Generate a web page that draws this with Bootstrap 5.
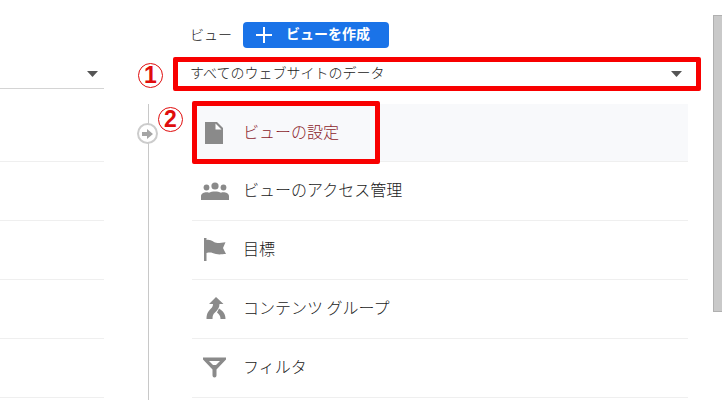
<!DOCTYPE html>
<html lang="ja">
<head>
<meta charset="utf-8">
<meta name="viewport" content="width=device-width, initial-scale=1">
<title>ビューの設定</title>
<link href="https://cdn.jsdelivr.net/npm/bootstrap@5.3.0/dist/css/bootstrap.min.css" rel="stylesheet">
<style>
  body { font-family: "Noto Sans CJK JP", sans-serif; color: #3c4043; font-size: 16px; background: #fff; }
  .admin { height: 100vh; }
  .side { width: 104px; }
  .gutter { width: 86px; padding-left: 44px; }
  .tail { width: 34px; }
  .head { height: 59px; padding-top: 10px; gap: 11px; }
  .picker { height: 30px; margin-bottom: 15px; }
  .picker select { height: 26px; font-size: 14px; line-height: 20px; font-weight: 300; color: #222; padding: 0 24px 0 0; appearance: none; }
  .caret { right: 6px; top: 12px; pointer-events: none; }
  .side .picker { border-bottom: 1px solid #d4d4d4; }
  .entry { height: 59px; border-bottom: 1px solid #efefef; font-weight: 300; color: #222; line-height: 24px; }
  .entry:first-child { height: 58px; }
  a.entry { padding: 0 0 4px 9px; gap: 14px; }
  a.entry svg { width: 28px; height: 28px; margin-top: 5px; fill: #8a8a8a; }
  .entry.current { background: #f8f9fb; color: #8c1d2c; }
  .menu { margin-left: 2px; }
  .title { font-size: 14px; font-weight: 300; line-height: 20px; color: #222; padding-bottom: 2px; }
  .create { background: #1a73e8; color: #fff; height: 26px; width: 146px; font-size: 14px; font-weight: 700; line-height: 20px; padding: 0 0 3px 13px; gap: 14px; border-radius: 4px; }
  .create svg { margin-top: 3px; }
  .create:hover { background: #1765cc; color: #fff; }
  .rail { width: 1px; background: #c8c8c8; margin-top: 104px; }
  .step { left: -11px; top: 19px; width: 21px; height: 21px; border: 2px solid #ccc; background: #fff; }
  .thumb { width: 9px; height: 297px; margin-top: 15px; background: #c9c9c9; border: 1px solid #b0b0b0; border-right: 0; }
  .frame { border: 5px solid #f80000; border-radius: 2px; pointer-events: none; }
  .frame-picker { left: -17px; right: -13px; top: -2px; height: 34px; }
  .frame-entry { left: 0; top: -3px; width: 188px; height: 63px; }
  .callout { width: 25px; height: 25px; border: 1px solid #e00c0c; color: #e00c0c; font-family: "Liberation Sans", sans-serif; font-size: 23px; line-height: 23px; font-weight: 700; }
  .callout-one { left: -52px; top: 4px; }
  .callout-two { left: -34px; top: 3px; }
</style>
<script src="https://cdn.jsdelivr.net/npm/bootstrap@5.3.0/dist/js/bootstrap.bundle.min.js"></script>
</head>
<body>
<main class="admin d-flex overflow-hidden">
  <section class="side flex-shrink-0">
    <div class="head"></div>
    <div class="picker position-relative">
      <select class="w-100 border-0 bg-transparent" aria-label="プロパティ"><option></option></select>
      <svg class="caret position-absolute" width="11" height="6" aria-hidden="true"><path d="M0 0h11L5.500 6z" fill="#555"/></svg>
    </div>
    <div>
      <div class="entry"></div><div class="entry"></div><div class="entry"></div><div class="entry"></div><div class="entry"></div>
    </div>
  </section>

  <div class="gutter flex-shrink-0 d-flex">
    <div class="rail position-relative">
      <span class="step position-absolute rounded-circle d-flex align-items-center justify-content-center">
        <svg width="11" height="10" viewBox="0 0 11 10" aria-hidden="true"><path d="M0 3h5V0l6 5-6 5V7H0z" fill="#a5a5a5"/></svg>
      </span>
    </div>
  </div>

  <section class="flex-grow-1">
    <div class="head d-flex align-items-center">
      <h1 class="title mb-0">ビュー</h1>
      <button type="button" class="create btn border-0 d-flex align-items-center">
        <svg width="16" height="16" aria-hidden="true"><path d="M8 0v16M0 8h16" stroke="#fff" stroke-width="2"/></svg>
        ビューを作成
      </button>
    </div>
    <div class="picker position-relative">
      <select class="w-100 border-0 bg-transparent" aria-label="ビュー"><option>すべてのウェブサイトのデータ</option></select>
      <svg class="caret position-absolute" width="11" height="6" aria-hidden="true"><path d="M0 0h11L5.500 6z" fill="#555"/></svg>
      <span class="frame frame-picker position-absolute"></span>
      <span class="callout callout-one position-absolute rounded-circle text-center">1</span>
    </div>
    <nav class="menu position-relative" aria-label="ビュー">
      <a href="#" class="entry current d-flex align-items-center text-decoration-none">
        <svg viewBox="0 0 28 28" aria-hidden="true"><path d="M4 3h12l6 6v16H4z"/><path d="M14.500 4.500v6h6z" fill="#fff"/></svg>
        ビューの設定
      </a>
      <a href="#" class="entry d-flex align-items-center text-decoration-none">
        <svg viewBox="0 0 28 28" aria-hidden="true"><circle cx="14" cy="8" r="3.600"/><circle cx="5.500" cy="9.500" r="2.900"/><circle cx="22.500" cy="9.500" r="2.900"/><path d="M0 22v-4c0-3 5-4.500 8-3.300 3-1.700 9-1.700 12 0 3-1.200 8 .3 8 3.300v4z"/></svg>
        ビューのアクセス管理
      </a>
      <a href="#" class="entry d-flex align-items-center text-decoration-none">
        <svg viewBox="0 0 28 28" aria-hidden="true"><path d="M3 1h2.500v2c5-1 7 3 11 3 3 0 5-.8 8-.8L22 11l3 6c-4 0-6 1-10 0-4-1-5-2-9.500-1v8H3z"/></svg>
        目標
      </a>
      <a href="#" class="entry d-flex align-items-center text-decoration-none">
        <svg viewBox="0 0 28 28" aria-hidden="true"><path d="M15 1l7.500 7h-4c0 4-2 6-4.500 8.500-2 2-2.500 3-2.500 6.500h-6c0-5 1.500-7.500 4-10 2-2 2.500-3 2.500-5h-4z"/><path d="M18 12.500c4 2.500 6.500 5 6.500 10.500h-5c0-3-1-4.500-3.500-6.500z"/></svg>
        コンテンツ グループ
      </a>
      <a href="#" class="entry d-flex align-items-center text-decoration-none">
        <svg viewBox="0 0 28 28" aria-hidden="true"><path fill-rule="evenodd" d="M2 2.500h23v2L15.500 14.500v6a2 2 0 0 1-4 0v-6L2 4.500zM8 6l4 4h3l4-4z"/></svg>
        フィルタ
      </a>
      <span class="frame frame-entry position-absolute"></span>
      <span class="callout callout-two position-absolute rounded-circle text-center">2</span>
    </nav>
  </section>

  <div class="tail flex-shrink-0 d-flex justify-content-end"><div class="thumb"></div></div>
</main>
</body>
</html>
